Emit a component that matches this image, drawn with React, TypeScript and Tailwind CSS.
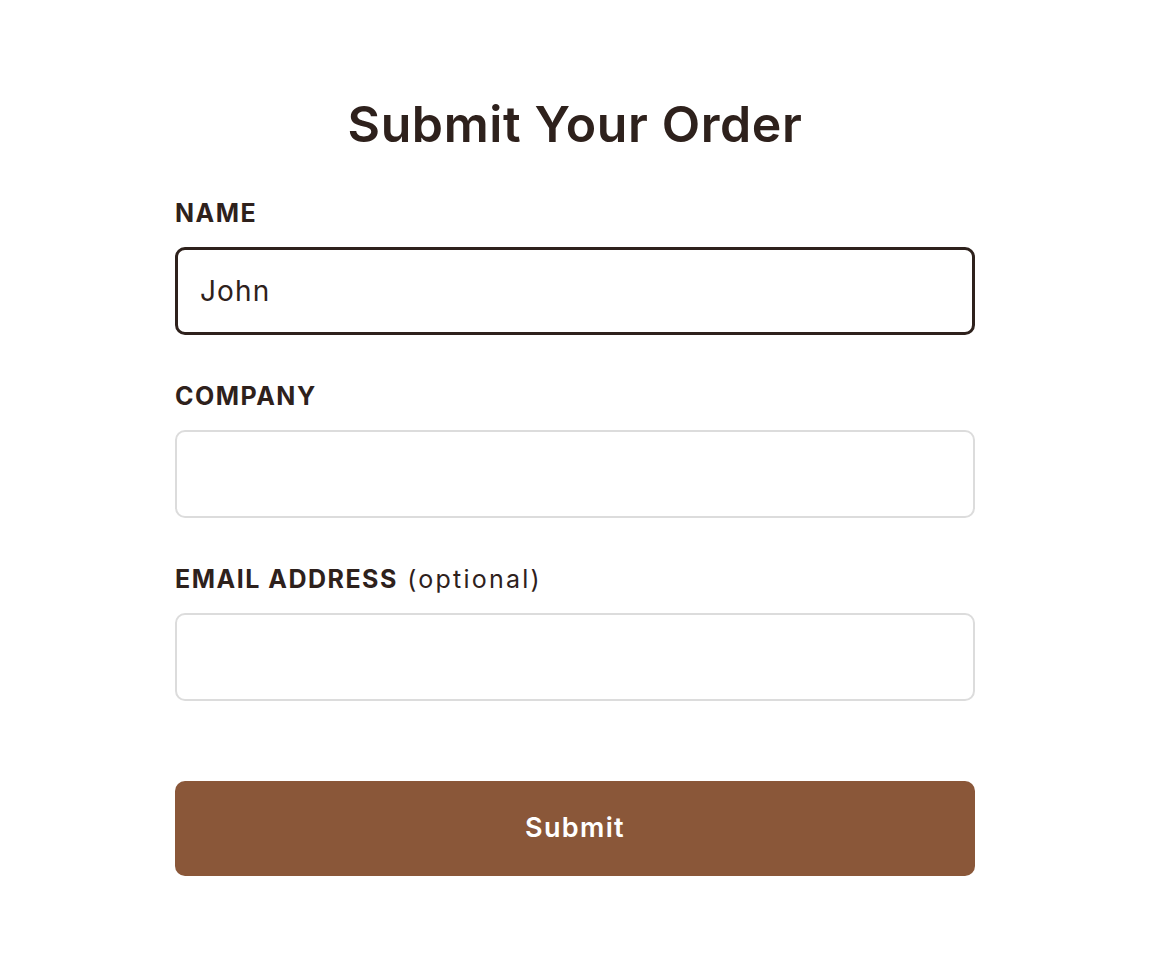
import { useState } from 'react';

function Field({
  label,
  hint,
  value,
  active,
  onChange,
}: {
  label: string;
  hint?: string;
  value: string;
  active?: boolean;
  onChange: (v: string) => void;
}) {
  return (
    <div className="flex flex-col">
      <label className="mb-[18px] h-8 text-[25px] leading-8 font-bold tracking-[0.06em] text-[#2e211c]">
        {label}
        {hint && <span className="font-normal tracking-[0.09em]"> {hint}</span>}
      </label>
      <input
        value={value}
        onChange={(e) => onChange(e.target.value)}
        className={
          active
            ? 'h-[88px] w-full rounded-[10px] border-[3px] border-[#2e211c] bg-white px-[22px] text-[28px] tracking-[0.04em] text-[#2e211c] outline-none'
            : 'h-[88px] w-full rounded-[10px] border-2 border-[#dcdcdc] bg-white px-[23px] text-[28px] tracking-[0.04em] text-[#2e211c] outline-none'
        }
      />
    </div>
  );
}

export default function App() {
  const [name, setName] = useState('John');
  const [company, setCompany] = useState('');
  const [email, setEmail] = useState('');

  return (
    <div className="min-h-screen bg-white pt-[96px] font-['Inter',sans-serif]">
      <form
        className="mx-auto flex w-[800px] flex-col"
        onSubmit={(e) => e.preventDefault()}
      >
        <h1 className="mb-[45px] h-14 text-center text-[50px] leading-[56px] font-semibold tracking-[0.012em] text-[#2e211c]">
          Submit Your Order
        </h1>
        <div className="flex flex-col gap-[45px]">
          <Field label="NAME" value={name} active onChange={setName} />
          <Field label="COMPANY" value={company} onChange={setCompany} />
          <Field label="EMAIL ADDRESS" hint="(optional)" value={email} onChange={setEmail} />
        </div>
        <button
          type="submit"
          className="mt-[80px] h-[95px] w-full rounded-[10px] bg-[#8a5739] text-[27px] font-semibold tracking-[0.05em] text-white"
        >
          Submit
        </button>
      </form>
    </div>
  );
}
